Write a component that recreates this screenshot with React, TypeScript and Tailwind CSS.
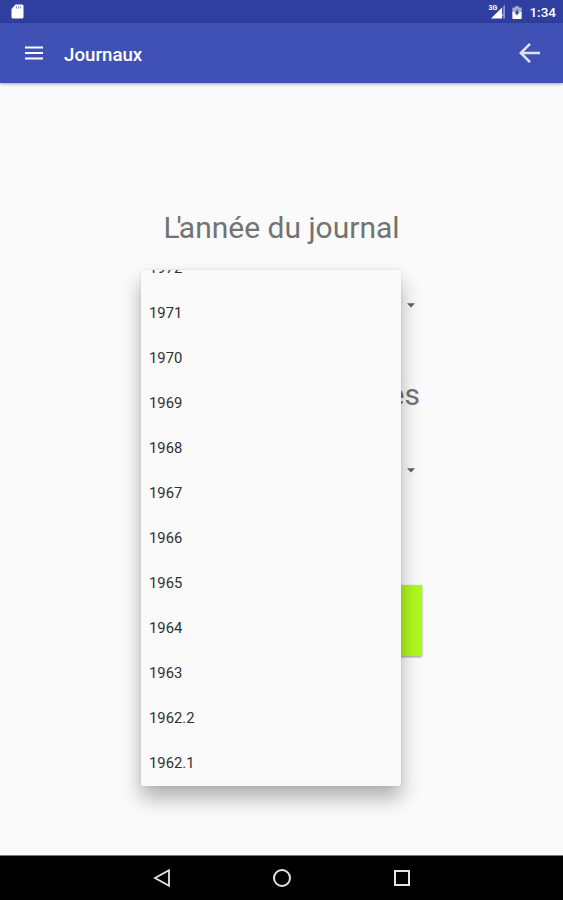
const years = ['1972', '1971', '1970', '1969', '1968', '1967', '1966', '1965', '1964', '1963', '1962.2', '1962.1'];

function StatusBar() {
  return (
    <div className="flex h-[23px] shrink-0 items-center bg-[#303f9f] pr-[7px] pl-[11px] text-white">
      <svg className="h-[15px] w-[13px]" viewBox="0 0 13 15">
        <path d="M4.5 .5H11A1.5 1.5 0 0 1 12.5 2V13A1.5 1.5 0 0 1 11 14.5H2A1.5 1.5 0 0 1 .5 13V5Z" fill="#fff" />
        <path d="M5.5 2v2.6M7.6 2v2.6M9.7 2v2.6" stroke="#303f9f" strokeOpacity=".55" strokeWidth="1" />
      </svg>
      <div className="ml-auto flex items-center">
        <div className="relative h-[15px] w-[18px]">
          <span className="absolute top-0 left-0 text-[7px] leading-[8px] font-bold">3G</span>
          <svg className="h-[15px] w-[18px]" viewBox="0 0 18 15">
            <path d="M3 14.5L14 3.5V14.5Z" fill="#fff" />
            <path d="M14 3.5L17 .5V14.5H14Z" fill="#8e97cf" />
            <path d="M14.7 10v-8M14.7 12v2.5" stroke="#303f9f" strokeWidth="1" />
          </svg>
        </div>
        <svg className="mt-px ml-[6px] h-[13px] w-[10px]" viewBox="0 0 10 14">
          <path d="M3.2 0h3.6v1.5H9.3a.7.7 0 0 1 .7.7V7H0V2.2a.7.7 0 0 1 .7-.7h2.5Z" fill="#a6add9" />
          <path d="M0 6.5H10V13.3a.7.7 0 0 1-.7.7H.7a.7.7 0 0 1-.7-.7Z" fill="#fff" />
          <path d="M5.8 3L2.4 8.4h2V10.5L7.8 6.6H5.8Z" fill="#303f9f" />
        </svg>
        <span className="mt-[2px] ml-[7px] text-[13.5px] leading-none font-medium">1:34</span>
      </div>
    </div>
  );
}

function AppBar() {
  return (
    <header className="relative flex h-[60px] shrink-0 items-center bg-[#3f51b5] pr-[23px] pl-[25px] text-white shadow-[0_1px_3px_rgba(0,0,0,0.35)]">
      <svg className="-mt-px h-[14px] w-[18px]" viewBox="0 0 18 14">
        <path d="M0 1.5H18M0 7H18M0 12.5H18" stroke="currentColor" strokeWidth="2" />
      </svg>
      <h1 className="ml-[21px] pt-[4px] text-[18.7px] leading-none font-medium">Journaux</h1>
      <svg className="ml-auto h-[20px] w-[21px] text-[#dfe2f4]" viewBox="0 0 21 20" fill="none" stroke="currentColor" strokeWidth="2.5">
        <path d="M21 10H2M11 .8L1.8 10L11 19.2" />
      </svg>
    </header>
  );
}

function Caret() {
  return (
    <svg className="h-[5px] w-[8px]" viewBox="0 0 8 5">
      <path d="M0 .3H8L4 4.6Z" fill="#616161" />
    </svg>
  );
}

function YearMenu() {
  return (
    <ul className="absolute top-[187px] left-[141px] flex h-[516px] w-[260px] flex-col justify-end overflow-hidden rounded-[2px] bg-[#fafafa] shadow-[0_12px_20px_rgba(0,0,0,0.3),0_0_3px_rgba(0,0,0,0.1)]">
      {years.map((year) => (
        <li key={year} className="flex h-[45px] shrink-0 items-center pl-[8px] text-[14.8px] text-[#303030]">
          {year}
        </li>
      ))}
    </ul>
  );
}

function NavBar() {
  return (
    <nav className="flex h-[45px] shrink-0 items-center justify-center gap-[100px] border-t border-[#777] bg-black text-[#e4e4e4]">
      <svg className="h-[20px] w-[20px]" viewBox="0 0 20 20" fill="none" stroke="currentColor" strokeWidth="1.8">
        <path d="M17 2.2V17.8L3 10Z" />
      </svg>
      <svg className="h-[20px] w-[20px]" viewBox="0 0 20 20" fill="none" stroke="currentColor" strokeWidth="2">
        <circle cx="10" cy="10" r="8" />
      </svg>
      <svg className="h-[20px] w-[20px]" viewBox="0 0 20 20" fill="none" stroke="currentColor" strokeWidth="2">
        <rect x="3" y="3" width="14" height="14" />
      </svg>
    </nav>
  );
}

export default function App() {
  return (
    <div className="flex h-[900px] w-[563px] flex-col overflow-hidden bg-[#fafafa] font-['Roboto',sans-serif]">
      <StatusBar />
      <AppBar />
      <main className="relative flex-1">
        <div className="mx-auto flex w-[281px] flex-col pt-[125px]">
          <h2 className="text-center text-[30px] leading-[40px] whitespace-nowrap text-[#737373]">
            <span className="tracking-[-3px]">L'</span>année du journal
          </h2>
          <div className="mt-[39px] flex h-[36px] items-center justify-end pr-[7px]">
            <Caret />
          </div>
          <h2 className="mt-[52px] pr-[2px] text-right text-[30px] leading-[40px] text-[#737373]">és</h2>
          <div className="mt-[37px] flex h-[36px] items-center justify-end pr-[7px]">
            <Caret />
          </div>
          <div className="mt-[97px] ml-[4px] h-[71px] bg-[#aef91c] shadow-[0_1px_2px_rgba(0,0,0,0.4)]" />
        </div>
        <YearMenu />
      </main>
      <NavBar />
    </div>
  );
}
